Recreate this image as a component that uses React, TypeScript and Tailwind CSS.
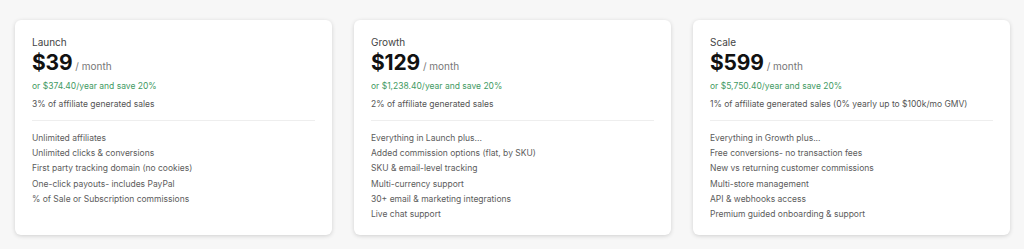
const plans = [
  {
    name: "Launch",
    price: "$39",
    yearly: "or $374.40/year and save 20%",
    fee: "3% of affiliate generated sales",
    features: [
      "Unlimited affiliates",
      "Unlimited clicks & conversions",
      "First party tracking domain (no cookies)",
      "One-click payouts- includes PayPal",
      "% of Sale or Subscription commissions",
    ],
  },
  {
    name: "Growth",
    price: "$129",
    yearly: "or $1,238.40/year and save 20%",
    fee: "2% of affiliate generated sales",
    features: [
      "Everything in Launch plus...",
      "Added commission options (flat, by SKU)",
      "SKU & email-level tracking",
      "Multi-currency support",
      "30+ email & marketing integrations",
      "Live chat support",
    ],
  },
  {
    name: "Scale",
    price: "$599",
    yearly: "or $5,750.40/year and save 20%",
    fee: "1% of affiliate generated sales (0% yearly up to $100k/mo GMV)",
    features: [
      "Everything in Growth plus...",
      "Free conversions- no transaction fees",
      "New vs returning customer commissions",
      "Multi-store management",
      "API & webhooks access",
      "Premium guided onboarding & support",
    ],
  },
];

export default function App() {
  return (
    <div className="w-[1024px] h-[249px] bg-[#f7f7f7] font-['Inter',sans-serif] pt-[20px] pl-[15px] pr-[14px]">
      <div className="grid grid-cols-3 gap-[22px]">
        {plans.map((plan) => (
          <div
            key={plan.name}
            className="h-[215px] bg-white rounded-[6px] shadow-[0_1px_4px_rgba(0,0,0,0.16)] pt-[15px] px-[17px]"
          >
            <div className="text-[10px] leading-[14px] text-[#444]">{plan.name}</div>
            <div className="flex items-baseline gap-[3px] mt-[1px]">
              <span className="text-[21px] leading-[26px] font-bold text-[#111] tracking-[-0.2px]">
                {plan.price}
              </span>
              <span className="text-[10px] text-[#777]">/ month</span>
            </div>
            <div className="mt-[4px] text-[8.5px] leading-[12px] text-[#3f9a63]">{plan.yearly}</div>
            <div className="mt-[6px] text-[8.5px] leading-[12px] text-[#555]">{plan.fee}</div>
            <div className="mt-[10px] h-px bg-[#eeeeee]" />
            <ul className="mt-[10px] flex flex-col">
              {plan.features.map((f) => (
                <li key={f} className="text-[8.5px] leading-[15.2px] text-[#5c5c5c]">
                  {f}
                </li>
              ))}
            </ul>
          </div>
        ))}
      </div>
    </div>
  );
}
